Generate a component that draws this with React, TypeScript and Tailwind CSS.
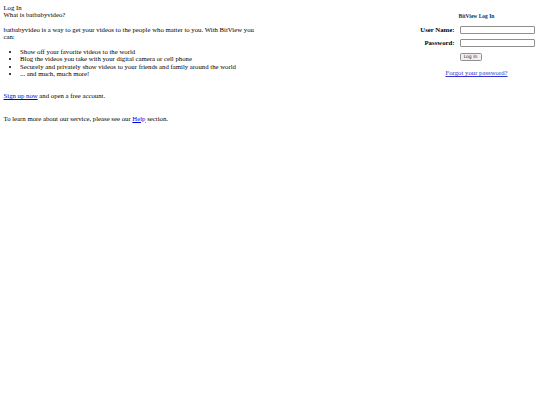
export default function App() {
  return (
    <div className="min-h-[405px] bg-white text-black text-[6.75px] leading-[7.65px] [font-family:'Liberation_Serif',serif]">
      <div className="flex justify-between px-[3.5px] pt-[3.5px]">
        {/* Left: intro copy */}
        <div className="w-[255px]">
          <div>Log In</div>
          <div>What is batbabyvideo?</div>
          <p className="mt-[6.7px]">
            batbabyvideo is a way to get your videos to the people who matter to you. With BitView you can:
          </p>
          <ul className="mt-[6.7px] list-disc pl-[16.5px]">
            <li>Show off your favorite videos to the world</li>
            <li>Blog the videos you take with your digital camera or cell phone</li>
            <li>Securely and privately show videos to your friends and family around the world</li>
            <li>... and much, much more!</li>
          </ul>
          <p className="mt-[14px]">
            <a href="#" className="text-[#0000ee] underline">Sign up now</a> and open a free account.
          </p>
          <p className="mt-[15px]">
            To learn more about our service, please see our{' '}
            <a href="#" className="text-[#0000ee] underline">Help</a> section.
          </p>
        </div>

        {/* Right: login box */}
        <div className="w-[118px] mr-[1px] mt-[9.5px] flex flex-col">
          <div className="text-center text-[5.5px] font-bold text-[#003366]">BitView Log In</div>
          <div className="mt-[5.5px] grid grid-cols-[37px_75px] gap-x-[5px] gap-y-[5px] items-center">
            <label className="text-right font-bold">User Name:</label>
            <input className="h-[8px] w-[75px] border border-[#8f8f8f] bg-white rounded-[1px]" />
            <label className="text-right font-bold">Password:</label>
            <input type="password" className="h-[8px] w-[75px] border border-[#8f8f8f] bg-white rounded-[1px]" />
            <div />
            <div>
              <button className="h-[8px] w-[22px] border border-[#8f8f8f] rounded-[1.5px] bg-[#efefef] text-[4.5px] leading-[6px] [font-family:'DejaVu_Sans',sans-serif] text-[#222]">
                Log In
              </button>
            </div>
          </div>
          <div className="mt-[8px] text-center">
            <a href="#" className="text-[#3333cc] underline">Forgot your password?</a>
          </div>
        </div>
      </div>
    </div>
  )
}
